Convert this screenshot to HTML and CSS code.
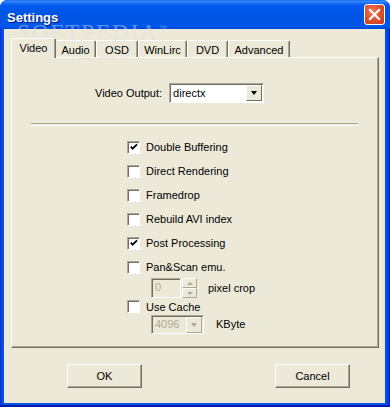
FILE: index.html
```html
<!DOCTYPE html>
<html lang="en">
  <head>
    <meta charset="UTF-8" />
    <title>Settings</title>
    <link rel="stylesheet" href="styles.css">
  </head>
  <body>
    <div class="window">
      <div class="titlebar">
        <span class="title">Settings</span>
        <button class="close">
          <svg width="13" height="13" viewBox="0 0 13 13">
            <path d="M2 2 L11 11 M11 2 L2 11" stroke="#fff" stroke-width="2.2" stroke-linecap="square" />
          </svg>
        </button>
      </div>
      <div class="client">
        <div class="tabs">
          <div class="tab active" style="width: 45px">Video</div>
          <div class="tab" style="width: 40px">Audio</div>
          <div class="tab" style="width: 42px">OSD</div>
          <div class="tab" style="width: 49px">WinLirc</div>
          <div class="tab" style="width: 41px">DVD</div>
          <div class="tab" style="width: 62px">Advanced</div>
        </div>
        <div class="panel">
          <div class="output-row">
            <span class="label">Video Output:</span>
            <div class="combo">
              <span class="combo-text">directx</span>
              <span class="arrow-btn"><span class="tri"></span></span>
            </div>
          </div>
          <div class="separator"></div>
          <div class="options">
            <div class="opt"><span class="check on"><svg width="11" height="11" viewBox="0 0 11 11"><path d="M2 4.5 L4 6.8 L8.8 2" stroke="#000" stroke-width="2" fill="none" /></svg></span>Double Buffering</div>
            <div class="opt"><span class="check"></span>Direct Rendering</div>
            <div class="opt"><span class="check"></span>Framedrop</div>
            <div class="opt"><span class="check"></span>Rebuild AVI index</div>
            <div class="opt"><span class="check on"><svg width="11" height="11" viewBox="0 0 11 11"><path d="M2 4.5 L4 6.8 L8.8 2" stroke="#000" stroke-width="2" fill="none" /></svg></span>Post Processing</div>
            <div class="opt"><span class="check"></span>Pan&amp;Scan emu.</div>
            <div class="sub spin-row">
              <span class="spin-text">0</span>
              <span class="spin-btns">
                <span class="spin-btn"><span class="tri up"></span></span>
                <span class="spin-btn"><span class="tri"></span></span>
              </span>
              <span class="sub-label">pixel crop</span>
            </div>
            <div class="opt small"><span class="check"></span>Use Cache</div>
            <div class="sub cache-row">
              <div class="combo disabled">
                <span class="combo-text">4096</span>
                <span class="arrow-btn"><span class="tri"></span></span>
              </div>
              <span class="sub-label kbyte">KByte</span>
            </div>
          </div>
        </div>
        <div class="buttons">
          <button class="btn">OK</button>
          <button class="btn">Cancel</button>
        </div>
      </div>
      <div class="watermark">SOFTPEDIA<sup>™</sup></div>
      <div class="watermark-url">www.softpedia.com</div>
    </div>
  </body>
</html>
```

FILE: styles.css
```css
body {
  margin: 0;
  background: #fff;
  font-family: "Liberation Sans", Arial, sans-serif;
  font-size: 11px;
  color: #000;
}
.window {
  position: relative;
  width: 390px;
  height: 407px;
  box-sizing: border-box;
  display: flex;
  flex-direction: column;
  background: linear-gradient(to right, #0019cf 0, #0842e0 1px, #0055e5 3px, #0055e5 385px, #0842e0 388px, #0019cf 390px);
  border-radius: 7px 7px 0 0;
  padding: 0 5px 4px 4px;
  overflow: hidden;
}
.window::after {
  content: "";
  position: absolute;
  left: 0;
  right: 0;
  bottom: 0;
  height: 2px;
  background: #001ea8;
}
.titlebar {
  height: 29px;
  margin: 0 -5px 0 -4px;
  display: flex;
  align-items: center;
  justify-content: space-between;
  padding: 0 5px 0 7px;
  box-sizing: border-box;
  border-radius: 7px 7px 0 0;
  background: linear-gradient(#0a5ae8 0, #3d8efc 1px, #1d6df5 3px, #0058ee 6px, #0055e5 14px, #0054e3 22px, #0059ef 26px, #0046d8 29px);
}
.title {
  color: #fff;
  font-weight: bold;
  font-size: 13px;
  padding-top: 6px;
  text-shadow: 1px 1px #0a1874;
}
.close {
  width: 21px;
  height: 21px;
  padding: 0;
  border: 1px solid #fff;
  border-radius: 3px;
  background: radial-gradient(circle at 40% 35%, #ec7b5c 0, #e0532f 45%, #c4381c 100%);
  display: flex;
  align-items: center;
  justify-content: center;
}
.client {
  flex: 1;
  background: #ece9d8;
  padding: 9px 6px 0 7px;
  display: flex;
  flex-direction: column;
}
.tabs {
  display: flex;
  align-items: flex-end;
  height: 19px;
  position: relative;
  z-index: 1;
}
.tab {
  height: 17px;
  box-sizing: border-box;
  border-left: 1px solid #fff;
  border-top: 1px solid #fff;
  border-right: 1px solid #716f64;
  box-shadow: inset -1px 0 #aca899;
  border-radius: 2px 2px 0 0;
  text-align: center;
  padding-top: 3px;
  background: #ece9d8;
}
.tab.active {
  height: 20px;
  margin-bottom: -1px;
  padding-top: 3px;
  margin-right: -2px;
}
.tab.active + .tab {
  margin-left: 2px;
  border-left: none;
}
.panel {
  height: 291px;
  box-sizing: border-box;
  border-left: 1px solid #fff;
  border-top: 1px solid #fff;
  border-right: 1px solid #716f64;
  border-bottom: 1px solid #716f64;
  box-shadow: inset -1px -1px #aca899;
  padding-top: 25px;
}
.output-row {
  display: flex;
  align-items: center;
  height: 20px;
  padding-left: 83px;
  gap: 7px;
}
.combo {
  width: 95px;
  height: 20px;
  box-sizing: border-box;
  border: 1px solid;
  border-color: #aca899 #fff #fff #aca899;
  box-shadow: inset 1px 1px #716f64;
  background: #fff;
  display: flex;
  align-items: center;
  justify-content: space-between;
  padding: 1px 1px 1px 3px;
}
.combo-text {
  padding-bottom: 1px;
}
.arrow-btn {
  width: 16px;
  height: 16px;
  box-sizing: border-box;
  background: #ece9d8;
  border: 1px solid;
  border-color: #fff #716f64 #716f64 #fff;
  display: flex;
  align-items: center;
  justify-content: center;
}
.tri {
  width: 0;
  height: 0;
  border-left: 3.5px solid transparent;
  border-right: 3.5px solid transparent;
  border-top: 4px solid #000;
}
.tri.up {
  border-top: none;
  border-bottom: 3px solid #aca899;
}
.separator {
  margin: 20px 20px 0 19px;
  height: 1px;
  border-top: 1px solid #aca899;
  border-bottom: 1px solid #fff;
}
.options {
  margin-top: 9px;
  margin-left: 115px;
  display: flex;
  flex-direction: column;
}
.opt {
  height: 24px;
  display: flex;
  align-items: center;
  gap: 6px;
}
.opt.small {
  height: 13px;
  margin-top: 2px;
}
.check {
  width: 13px;
  height: 13px;
  box-sizing: border-box;
  background: #fff;
  border: 1px solid;
  border-color: #aca899 #fff #fff #aca899;
  box-shadow: inset 1px 1px #716f64;
  display: flex;
  align-items: center;
  justify-content: center;
  padding: 1px 0 0 1px;
}
.sub {
  margin-left: 24px;
  display: flex;
  align-items: center;
}
.spin-row {
  height: 20px;
  margin-top: -1px;
}
.spin-text {
  width: 30px;
  height: 20px;
  box-sizing: border-box;
  border: 1px solid;
  border-color: #aca899 #fff #fff #aca899;
  box-shadow: inset 1px 1px #716f64;
  color: #aca899;
  padding: 2px 0 0 3px;
}
.spin-btns {
  display: flex;
  flex-direction: column;
  margin-left: 1px;
}
.spin-btn {
  width: 15px;
  height: 10px;
  box-sizing: border-box;
  border: 1px solid;
  border-color: #fff #aca899 #aca899 #fff;
  display: flex;
  align-items: center;
  justify-content: center;
}
.spin-btn .tri {
  border-left-width: 3px;
  border-right-width: 3px;
  border-top: 3px solid #aca899;
}
.spin-btn .tri.up {
  border-top: none;
}
.sub-label {
  margin-left: 11px;
  padding-bottom: 1px;
}
.cache-row {
  margin-top: 2px;
  height: 19px;
}
.combo.disabled {
  width: 53px;
  height: 19px;
  background: #ece9d8;
  color: #aca899;
}
.combo.disabled .arrow-btn {
  border-color: #fff #aca899 #aca899 #fff;
}
.combo.disabled .tri {
  border-top-color: #aca899;
}
.kbyte {
  margin-left: 12px;
}
.buttons {
  display: flex;
  justify-content: space-between;
  padding: 0 29px 0 56px;
  margin-top: 16px;
}
.btn {
  width: 75px;
  height: 24px;
  font-family: "Liberation Sans", Arial, sans-serif;
  font-size: 11px;
  background: #ece9d8;
  border: 1px solid;
  border-color: #fff #716f64 #716f64 #fff;
  box-shadow: inset -1px -1px #aca899;
  padding: 0 0 1px;
}
.watermark {
  position: absolute;
  left: 17px;
  top: 17px;
  font-family: "Liberation Serif", serif;
  font-size: 23px;
  line-height: 24px;
  letter-spacing: 2px;
  color: rgba(225, 225, 225, 0.45);
  pointer-events: none;
}
.watermark sup {
  font-size: 8px;
  font-family: "Liberation Sans", sans-serif;
}
.watermark-url {
  position: absolute;
  left: 78px;
  top: 54px;
  font-size: 6px;
  line-height: 6px;
  color: rgba(190, 190, 190, 0.4);
}
```
